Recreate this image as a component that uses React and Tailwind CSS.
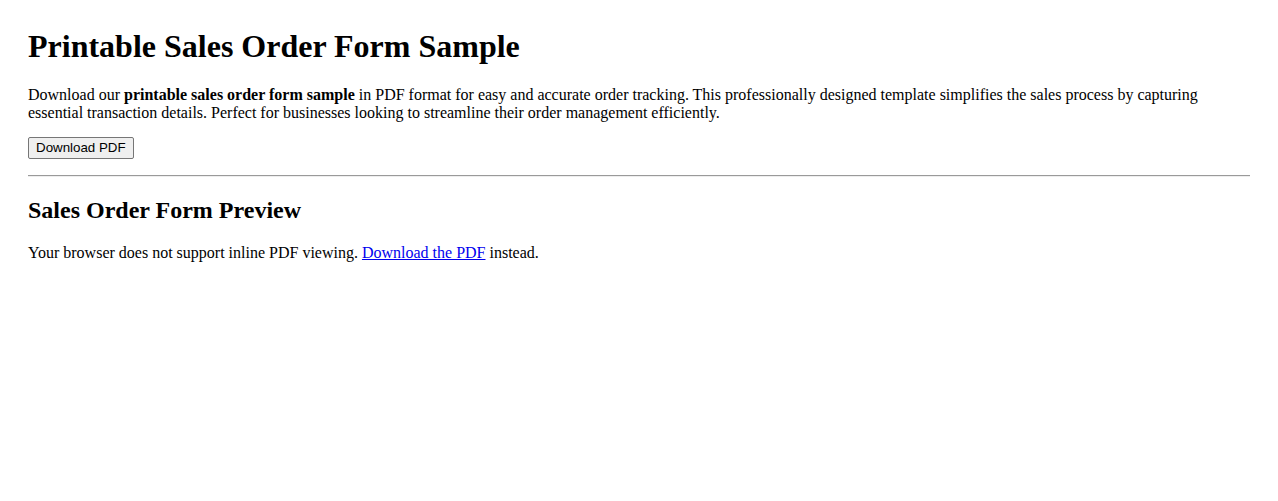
export default function App() {
  return (
    <div className="min-h-screen bg-white px-[28px] pt-[28px] pb-8 font-['Liberation_Serif',serif] text-black text-[16px] leading-[1.15]">
      <h1 className="text-[32px] font-bold leading-[1.15] mb-[21px]">Printable Sales Order Form Sample</h1>
      <p className="mb-[14px]">
        Download our <strong className="font-bold">printable sales order form sample</strong> in PDF format for easy and accurate order tracking. This professionally designed template simplifies the sales process by capturing essential transaction details. Perfect for businesses looking to streamline their order management efficiently.
      </p>
      <div className="mb-[16px]">
        <button className="bg-[#efefef] border border-[#767676] rounded-[2px] px-[7px] py-[2px] text-[13.33px] leading-[1.2] text-black font-['Liberation_Sans',Arial,sans-serif]">
          Download PDF
        </button>
      </div>
      <hr className="h-0 border-0 border-t border-b border-t-[#9a9a9a] border-b-[#eeeeee]" />
      <h2 className="text-[24px] font-bold leading-[1.15] mt-[20px] mb-[20px]">Sales Order Form Preview</h2>
      <p>
        Your browser does not support inline PDF viewing. <a href="#" className="text-[#0000ee] underline">Download the PDF</a> instead.
      </p>
    </div>
  );
}
